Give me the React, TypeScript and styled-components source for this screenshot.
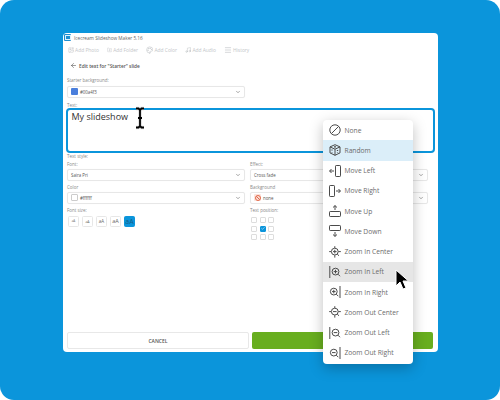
import React from "react";
import styled, { createGlobalStyle } from "styled-components";
import { ArrowLeft, ChevronDown, Check, ImagePlus, FolderPlus, Palette, Music, Menu as MenuIcon } from "lucide-react";

const Global = createGlobalStyle`
  html, body { margin: 0; padding: 0; width: 500px; height: 400px; overflow: hidden; background: #fff; }
  * { box-sizing: border-box; }
`;
const Stage = styled.div`
  position: relative; width: 500px; height: 400px; background: #0b95db; border-radius: 14px;
  padding: 33px 62px 48px 63px; font-family: "Open Sans", "Noto Sans", sans-serif; overflow: hidden;
`;
const Win = styled.div`
  height: 319px; background: #fff; border-radius: 4px; display: flex; flex-direction: column;
  padding: 0 4px 3px 4px;
`;
const TitleBar = styled.div`
  height: 9px; margin-left: -3px; display: flex; align-items: center; gap: 3px; font-size: 4.7px; color: #666;
`;
const AppLogo = styled.div`
  width: 7px; height: 7px; background: #1f8fd0; border-radius: 1px; display: flex; align-items: center; justify-content: center;
  &::after { content: ""; width: 4px; height: 3px; border: 1px solid #dff1fb; }
`;
const Toolbar = styled.div`
  height: 14px; margin-top: 1px; display: flex; align-items: center; gap: 8px; padding-left: 1px; font-size: 4.9px; color: #c3c6c9;
`;
const Tool = styled.span`display: inline-flex; align-items: center; gap: 1px; width: 31px; white-space: nowrap;`;
const Heading = styled.div`
  margin-top: 4px; height: 9px; display: flex; align-items: center; gap: 2px; padding-left: 3px; font-size: 4.8px; font-weight: 600; color: #555;
`;
const FieldLabel = styled.div`font-size: 4.5px; color: #888; height: 7px; line-height: 7px;`;
const StarterField = styled.div`margin-top: 7px; width: 178px; display: flex; flex-direction: column; gap: 1.5px;`;
const Select = styled.div`
  height: 12px; border: 1px solid #e7e7e7; border-radius: 2px; display: flex; align-items: center; gap: 2px; padding: 0 3px;
  font-size: 4.4px; color: #555; box-shadow: 0 0 1px rgba(0,0,0,.05);
`;
const Grow = styled.span`flex: 1;`;
const Swatch = styled.span<{ $c: string }>`
  width: 7px; height: 7px; border-radius: 1px; background: ${p => p.$c}; border: ${p => p.$c === "#fff" ? "1px solid #ccc" : "none"};
`;
const NoneSwatch = styled.span`
  width: 7px; height: 7px; border-radius: 1px; background: #fbe3dc; display: flex; align-items: center; justify-content: center;
`;
const TextLabel = styled(FieldLabel)`margin-top: 5px; height: 5px; line-height: 5px;`;
const TextBox = styled.div`
  margin: 0 0 0 -1px; height: 45px; width: 369px; border: 2px solid #0b95db; border-radius: 4px; padding: 1px 3.5px;
  font-size: 9px; line-height: 12px; color: #333;
`;
const Style = styled(FieldLabel)`margin-top: 0; height: 6px; line-height: 6px;`;
const Grid = styled.div`
  margin-top: 2px; display: grid; grid-template-columns: 178px 178px; column-gap: 5px; row-gap: 3px;
`;
const Col = styled.div`display: flex; flex-direction: column; gap: 1px;`;
const SizeRow = styled.div`display: flex; gap: 3px; margin: 1px 0 0 1px;`;
const SizeBtn = styled.span<{ $on?: boolean; $s: number }>`
  width: 11px; height: 11px; border-radius: 1.5px; border: 1px solid ${p => p.$on ? "#0b95db" : "#e7e7e7"};
  background: ${p => p.$on ? "#0b95db" : "#fff"}; color: ${p => p.$on ? "#135f88" : "#666"};
  display: flex; align-items: center; justify-content: center; font-size: ${p => p.$s}px;
`;
const PosGrid = styled.div`display: grid; grid-template-columns: repeat(3, 6px); gap: 2.5px; margin: 2.5px 0 0 1px;`;
const PosCell = styled.span<{ $on?: boolean }>`
  width: 6px; height: 6px; border-radius: 1px; border: 1px solid ${p => p.$on ? "#0b95db" : "#ddd"};
  background: ${p => p.$on ? "#0b95db" : "#fff"}; display: flex; align-items: center; justify-content: center; color: #fff;
`;
const Spacer = styled.div`flex: 1;`;
const Footer = styled.div`display: grid; grid-template-columns: 182px 181px; gap: 3px;`;
const Cancel = styled.div`
  height: 17px; border: 1px solid #e8e8e8; border-radius: 2px; display: flex; align-items: center; justify-content: center;
  font-size: 5px; font-weight: 600; color: #555;
`;
const Ok = styled.div`height: 17px; background: #68ae1f; border-radius: 2px;`;
const Menu = styled.div`
  position: absolute; left: 323px; top: 120px; width: 90px; height: 244px; background: #fff; border-radius: 4px;
  box-shadow: 0 4px 14px rgba(0,0,0,.25); display: flex; flex-direction: column;
`;
const Item = styled.div<{ $bg?: string }>`
  height: 20.25px; flex: none; display: flex; align-items: center; gap: 4px; padding-left: 5.5px; font-size: 6.7px; color: #6b6b6b;
  background: ${p => p.$bg || "transparent"};
`;
const IconBox = styled.svg`width: 12px; height: 12px; flex: none; fill: none; stroke: #4a4a4a; stroke-width: 1;`;
const Cursor = styled.svg`position: absolute; overflow: visible;`;

const Zoom = ({ kind, plus }: { kind: "c" | "l" | "r"; plus: boolean }) => {
  const cx = kind === "l" ? 6.5 : kind === "r" ? 4.8 : 5.8;
  return (
    <IconBox viewBox="0 0 12 12">
      <circle cx={cx} cy="5.6" r="3.4" />
      <path d={`M${cx - 1.8} 5.6h3.6${plus ? `M${cx} 3.8v3.6` : ""}`} />
      {kind === "c" && <path d="M5.8 .2v1.8M5.8 9.2v2.4M.2 5.6h1.8M9.4 5.6h2.4M8.2 8l1.8 1.8" />}
      {kind === "l" && <path d="M.8 0v12M9 8.2l2 2" />}
      {kind === "r" && <path d="M11 0v12M7.3 8.2l2 2" />}
    </IconBox>
  );
};
const items: [string, React.ReactNode, string?][] = [
  ["None", <IconBox viewBox="0 0 12 12"><circle cx="6" cy="6" r="5.2" /><path d="M2.4 9.6l7.2-7.2" /></IconBox>],
  ["Random", <IconBox viewBox="0 0 12 12"><path d="M6 .7l5 2.2v6L6 11.3 1 8.900v-6zM1 2.900l5 2.300 5-2.300M6 5.200v6.100" /><path d="M3 5.500v1M3 8v.5M8.500 6v1M8.500 8.500v.5M5 2.800h2" strokeWidth="1.300" /></IconBox>, "#dbeef9"],
  ["Move Left", <IconBox viewBox="0 0 12 12"><rect x="6.500" y=".5" width="5" height="11" rx=".7" /><path d="M5 6H.6M2.500 4 .6 6l1.900 2" /></IconBox>],
  ["Move Right", <IconBox viewBox="0 0 12 12"><rect x=".5" y=".5" width="5" height="11" rx=".7" /><path d="M7 6h4.400M9.500 4l1.900 2-1.900 2" /></IconBox>],
  ["Move Up", <IconBox viewBox="0 0 12 12"><rect x=".5" y="6.500" width="11" height="5" rx=".7" /><path d="M6 5V.6M4 2.500 6 .6l2 1.900" /></IconBox>],
  ["Move Down", <IconBox viewBox="0 0 12 12"><rect x=".5" y=".5" width="11" height="5" rx=".7" /><path d="M6 7v4.400M4 9.500l2 1.900 2-1.900" /></IconBox>],
  ["Zoom In Center", <Zoom kind="c" plus />],
  ["Zoom In Left", <Zoom kind="l" plus />, "#e6e6e6"],
  ["Zoom In Right", <Zoom kind="r" plus />],
  ["Zoom Out Center", <Zoom kind="c" plus={false} />],
  ["Zoom Out Left", <Zoom kind="l" plus={false} />],
  ["Zoom Out Right", <Zoom kind="r" plus={false} />],
];

const beam = "M2 1.500h2.500L6 3l1.500-1.500H10M6 3v16M2 20.500h2.500L6 19l1.500 1.500H10M4 11h4";

export default function App() {
  return (
    <Stage>
      <Global />
      <Win>
        <TitleBar><AppLogo />Icecream Slideshow Maker 5.16</TitleBar>
        <Toolbar>
          <Tool><ImagePlus size={8} />Add Photo</Tool>
          <Tool><FolderPlus size={8} />Add Folder</Tool>
          <Tool><Palette size={8} />Add Color</Tool>
          <Tool><Music size={8} />Add Audio</Tool>
          <Tool><MenuIcon size={8} />History</Tool>
        </Toolbar>
        <Heading><ArrowLeft size={7} />Edit text for "Starter" slide</Heading>
        <StarterField>
          <FieldLabel>Starter background:</FieldLabel>
          <Select><Swatch $c="#4a7fdc" />#00a4f3<Grow /><ChevronDown size={6} /></Select>
        </StarterField>
        <TextLabel>Text:</TextLabel>
        <TextBox>My slideshow</TextBox>
        <Style>Text style:</Style>
        <Grid>
          <Col><FieldLabel>Font:</FieldLabel><Select>Saira Pri<Grow /><ChevronDown size={6} /></Select></Col>
          <Col><FieldLabel>Effect:</FieldLabel><Select>Cross fade<Grow /><ChevronDown size={6} /></Select></Col>
          <Col><FieldLabel>Color</FieldLabel><Select><Swatch $c="#fff" />#ffffff<Grow /><ChevronDown size={6} /></Select></Col>
          <Col>
            <FieldLabel>Background</FieldLabel>
            <Select>
              <NoneSwatch>
                <svg width="6" height="6" viewBox="0 0 12 12" fill="none" stroke="#e2674a" strokeWidth="2"><circle cx="6" cy="6" r="5" /><path d="M2.500 2.500l7 7" /></svg>
              </NoneSwatch>
              none<Grow /><ChevronDown size={6} />
            </Select>
          </Col>
          <Col>
            <FieldLabel>Font size:</FieldLabel>
            <SizeRow>
              {[3, 3.5, 4.5, 5.5, 7].map((s, i) => <SizeBtn key={s} $s={s} $on={i === 4}>aA</SizeBtn>)}
            </SizeRow>
          </Col>
          <Col>
            <FieldLabel>Text position:</FieldLabel>
            <PosGrid>
              {[0, 1, 2, 3, 4, 5, 6, 7, 8].map(i => <PosCell key={i} $on={i === 4}>{i === 4 && <Check size={5} strokeWidth={3} />}</PosCell>)}
            </PosGrid>
          </Col>
        </Grid>
        <Spacer />
        <Footer><Cancel>CANCEL</Cancel><Ok /></Footer>
      </Win>
      <Menu>
        {items.map(([t, ic, bg]) => <Item key={t} $bg={bg}>{ic}{t}</Item>)}
      </Menu>
      <Cursor style={{ left: 395, top: 269 }} width="14" height="22" viewBox="0 0 14 22">
        <path d="M1 1v16l4-4 3 7 3-1-3-7h5.500z" fill="#000" stroke="#fff" strokeWidth="1" />
      </Cursor>
      <Cursor style={{ left: 134, top: 107 }} width="12" height="22" viewBox="0 0 12 22">
        <path d={beam} fill="none" stroke="#ddd" strokeWidth="3.500" />
        <path d={beam} fill="none" stroke="#000" strokeWidth="1.800" />
      </Cursor>
    </Stage>
  );
}
